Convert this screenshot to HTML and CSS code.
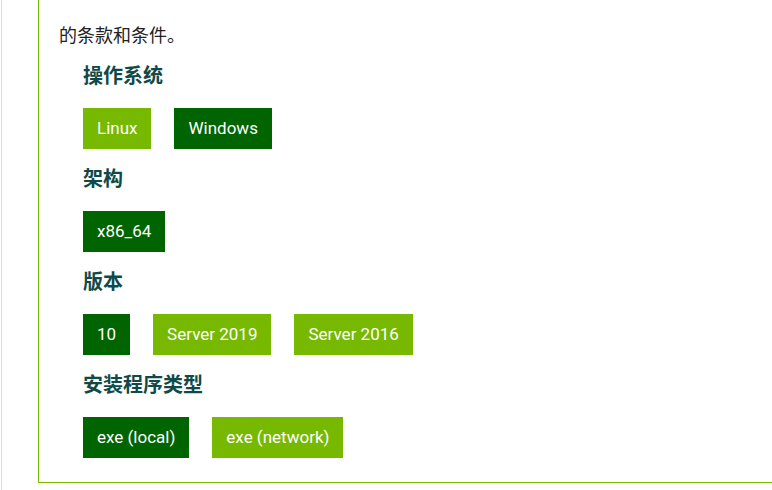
FILE: index.html
```html
<!DOCTYPE html>
<html lang="zh-CN">
<head>
<meta charset="utf-8">
<title>CUDA 下载</title>
<link rel="stylesheet" href="styles.css">
</head>
<body>
<div class="page">
  <div class="panel">
    <p class="intro">的条款和条件。</p>
    <div class="group">
      <h3 class="label">操作系统</h3>
      <div class="options">
        <span class="opt opt-light">Linux</span>
        <span class="opt opt-dark">Windows</span>
      </div>
    </div>
    <div class="group">
      <h3 class="label">架构</h3>
      <div class="options">
        <span class="opt opt-dark">x86_64</span>
      </div>
    </div>
    <div class="group">
      <h3 class="label">版本</h3>
      <div class="options">
        <span class="opt opt-dark">10</span>
        <span class="opt opt-light">Server 2019</span>
        <span class="opt opt-light">Server 2016</span>
      </div>
    </div>
    <div class="group">
      <h3 class="label">安装程序类型</h3>
      <div class="options">
        <span class="opt opt-dark">exe (local)</span>
        <span class="opt opt-light">exe (network)</span>
      </div>
    </div>
  </div>
</div>
</body>
</html>
```

FILE: styles.css
```css
html, body {
  margin: 0;
  padding: 0;
  background: #ffffff;
  overflow: hidden;
}

.page {
  margin-left: 1px;
  border-left: 1px solid #dcdcdc;
  min-height: 490px;
  box-sizing: border-box;
}

.panel {
  margin-left: 36px;
  border-left: 1px solid #76b900;
  border-bottom: 1px solid #76b900;
  padding: 20px 0 24px 20px;
}

.intro {
  margin: 0;
  font-family: "Noto Sans CJK SC", "Noto Sans", sans-serif;
  font-size: 18px;
  line-height: 28px;
  color: #222222;
}

.group {
  padding-left: 24px;
}

.group:first-of-type .label {
  margin-top: 15px;
}

.label {
  margin: 17px 0 21px 0;
  font-family: "Noto Sans CJK SC", "Noto Sans", sans-serif;
  font-size: 20px;
  line-height: 24px;
  font-weight: 700;
  color: #0f4a48;
}

.options {
  display: flex;
  gap: 23px;
}

.opt {
  display: block;
  height: 41px;
  line-height: 41px;
  padding: 0 14px;
  font-family: Roboto, "Liberation Sans", sans-serif;
  font-size: 17px;
  color: #ffffff;
}

.opt-light {
  background: #76b900;
}

.opt-dark {
  background: #006400;
}
```
